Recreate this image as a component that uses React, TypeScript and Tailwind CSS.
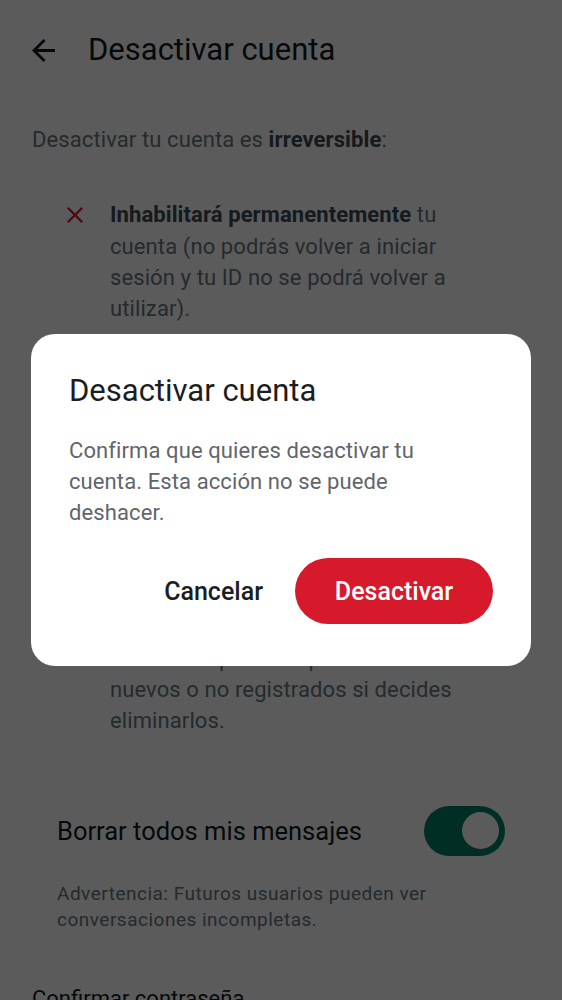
import React from "react";

const font = { fontFamily: "Roboto, 'Noto Sans', sans-serif" };

type Item = { lines: React.ReactNode[] };

const items: Item[] = [
  {
    lines: [
      <>
        <b className="font-bold text-[#3b4a54]">Inhabilitará permanentemente</b> tu
      </>,
      "cuenta (no podrás volver a iniciar",
      "sesión y tu ID no se podrá volver a",
      "utilizar).",
    ],
  },
  {
    lines: [
      <>
        <b className="font-bold text-[#3b4a54]">Eliminará</b> tu información de
      </>,
      "perfil y tu foto, y te sacará de todos",
      "tus grupos y comunidades de",
      "forma definitiva.",
    ],
  },
  {
    lines: [
      <>
        <b className="font-bold text-[#3b4a54]">Borrará</b> tu historial de chats
      </>,
      "de este dispositivo y tu copia de",
      "seguridad. Los canales que hayas",
      "creado y tus mensajes en ellos no",
      "estarán disponibles para los usuarios",
      "nuevos o no registrados si decides",
      "eliminarlos.",
    ],
  },
];

const BackArrow = () => (
  <svg width="23" height="23" viewBox="4 4 16 16" fill="#111b21">
    <path d="M20 11H7.83l5.59-5.59L12 4l-8 8 8 8 1.41-1.41L7.83 13H20v-2z" />
  </svg>
);

const CloseIcon = () => (
  <svg width="16" height="16" viewBox="5 5 14 14" fill="#d61a2b">
    <path d="M19 6.41 17.59 5 12 10.59 6.41 5 5 6.41 10.59 12 5 17.59 6.41 19 12 13.41 17.59 19 19 17.59 13.41 12z" />
  </svg>
);

const ListItem = ({ item }: { item: Item }) => (
  <li className="flex gap-[27px] pl-[35px]">
    <span className="mt-[8px] w-4 shrink-0">
      <CloseIcon />
    </span>
    <div className="text-[22px] leading-[31.33px] tracking-[0.1px] text-[#667781]">
      {item.lines.map((line, i) => (
        <div key={i} className="whitespace-nowrap">
          {line}
        </div>
      ))}
    </div>
  </li>
);

const Page = () => (
  <div className="min-h-screen bg-white">
    <header className="flex h-[100px] items-center gap-[33px] px-8">
      <BackArrow />
      <h1 className="text-[31px] text-[#111b21]">Desactivar cuenta</h1>
    </header>

    <div className="px-8">
      <p className="mt-6 text-[22px] leading-[31.33px] tracking-[0.1px] text-[#667781]">
        Desactivar tu cuenta es{" "}
        <b className="font-bold text-[#3b4a54]">irreversible</b>:
      </p>

      <ul className="mt-[44px] flex flex-col gap-[33.7px]">
        {items.map((item, i) => (
          <ListItem key={i} item={item} />
        ))}
      </ul>

      <div className="mt-[69px] flex items-center justify-between px-[25px]">
        <span className="text-[25.5px] text-[#111b21]">Borrar todos mis mensajes</span>
        <div className="flex h-[50px] w-[81px] items-center justify-end rounded-full bg-[#008069] pr-[6px]">
          <div className="h-[37px] w-[37px] rounded-full bg-white" />
        </div>
      </div>

      <p className="mt-[25px] px-[25px] text-[19px] leading-[26px] tracking-[0.5px] text-[#667781]">
        Advertencia: Futuros usuarios pueden ver
        <br />
        conversaciones incompletas.
      </p>

      <p className="mt-[50px] text-[22px] leading-[31.33px] text-[#111b21]">
        Confirmar contraseña
      </p>
      <div className="mt-3 h-[56px] rounded border border-[#8696a0]" />
    </div>
  </div>
);

const Dialog = () => (
  <div className="fixed inset-0 flex items-center justify-center bg-black/[0.643] px-[31px]">
    <div className="w-full rounded-[24px] bg-white px-[38px] pb-[42px] pt-[39px]">
      <h2 className="text-[31px] leading-[36px] text-[#1c1d1f]">Desactivar cuenta</h2>
      <p className="mt-[26px] text-[22px] leading-[31.33px] tracking-[0.1px] text-[#5f656d]">
        Confirma que quieres desactivar tu
        <br />
        cuenta. Esta acción no se puede
        <br />
        deshacer.
      </p>
      <div className="mt-[30px] flex items-center justify-end gap-[32px]">
        <button className="text-[25px] font-medium text-[#1c1d1f]">Cancelar</button>
        <button className="h-[66px] w-[198px] rounded-full bg-[#d61a2b] text-[25px] font-medium text-white">
          Desactivar
        </button>
      </div>
    </div>
  </div>
);

export default function App() {
  return (
    <div style={font}>
      <Page />
      <Dialog />
    </div>
  );
}
